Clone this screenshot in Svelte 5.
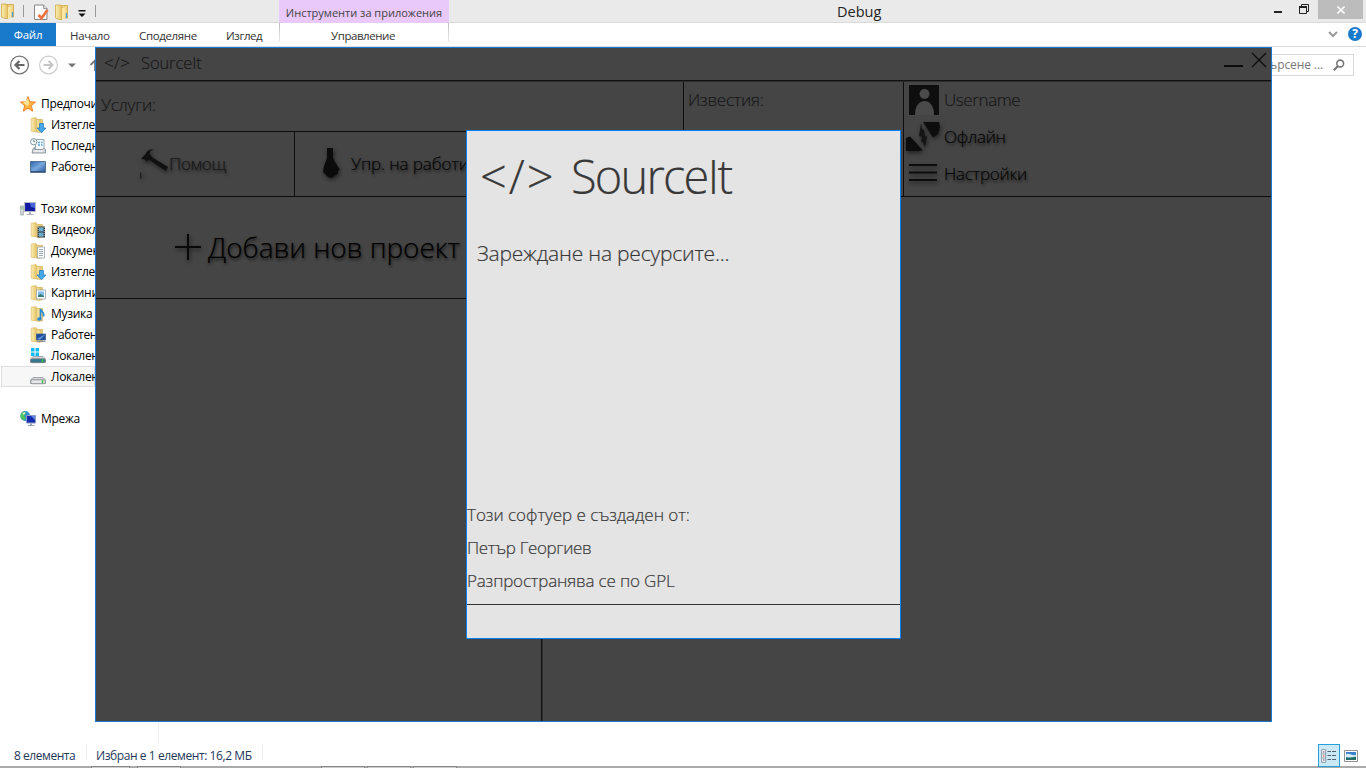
<script>
  const groups = [
    {
      label: 'Предпочи', icon: 'star',
      items: [
        { label: 'Изтегле', icon: 'download' },
        { label: 'Последн', icon: 'recent' },
        { label: 'Работен', icon: 'screen' }
      ]
    },
    {
      label: 'Този комп', icon: 'pc',
      items: [
        { label: 'Видеокл', icon: 'video' },
        { label: 'Докумен', icon: 'doc' },
        { label: 'Изтегле', icon: 'download' },
        { label: 'Картини', icon: 'picture' },
        { label: 'Музика', icon: 'music' },
        { label: 'Работен', icon: 'desk' },
        { label: 'Локален', icon: 'windisk' },
        { label: 'Локален', icon: 'disk', selected: true }
      ]
    },
    { label: 'Мрежа', icon: 'network', items: [] }
  ];
  const folders = ['download', 'video', 'doc', 'picture', 'music', 'desk'];
  const taskButtons = [[91, 39], [137, 44], [321, 44], [367, 44], [413, 44]];
</script>

{#snippet icon(name)}
  <svg class="ico" viewBox="0 0 16 16" width="16" height="16">
    <defs>
      <linearGradient id="fold" x1="0" x2="1"><stop offset="0" stop-color="#fbeeb4" /><stop offset="1" stop-color="#e3c062" /></linearGradient>
      <linearGradient id="blue" x1="0" y1="0" x2="1" y2="1"><stop offset="0" stop-color="#2c62ae" /><stop offset=".5" stop-color="#78a8dc" /><stop offset="1" stop-color="#24549a" /></linearGradient>
    </defs>
    {#if folders.includes(name)}
      <path d="M7 2.5h5.5V15H7z" fill="#e8cb78" stroke="#cda94f" stroke-width=".6" />
      <path d="M1.2 1.2 6 .6l1 1.6V15l-5.8-.8z" fill="url(#fold)" stroke="#d6b65c" stroke-width=".6" />
      <path d="M6.4 2 10 3v12.5L6.4 14.6z" fill="#f2dc93" stroke="#d0ae55" stroke-width=".5" />
    {/if}
    {#if name === 'folder'}
      <path d="M6 1.500h7.500V14H6z" fill="#f0d684" stroke="#cda540" stroke-width=".8" />
      <path d="M1.500 1H6l2 2v12.500H5L1.500 14z" fill="url(#fold)" stroke="#d0a944" stroke-width=".8" />
      <path d="M8 4h3v11H8z" fill="#f7e6a5" />
      <path d="M12.500 9v5" stroke="#4ba3df" stroke-width="1.400" />
    {:else if name === 'star'}
      <path d="M8 .5 10 5.8l5.6.3-4.3 3.6 1.5 5.5L8 12.2l-4.8 3 1.5-5.5L.4 6.1 6 5.800z" fill="#ffb33c" stroke="#e8792a" stroke-width=".9" />
      <path d="M8 2.500 9.200 6.500 8 10 3 7z" fill="#ffe39a" />
    {:else if name === 'download'}
      <path d="M9.500 6.500h4v4.500H16L11.500 15.800 7 11h2.500z" fill="#45a8ea" stroke="#1b74bd" stroke-width=".7" />
    {:else if name === 'recent'}
      <path d="M5.500 1.500h8.500v10H5.500z" fill="#f2f8fc" stroke="#8296a4" stroke-width=".8" />
      <path d="M8 4.500h2m1 0h1.500M8 7h2m1 0h1.500" stroke="#56a5d6" stroke-width="1.300" />
      <path d="m3 10.500 1.500-1v2h8l1.500-1 1.500 1v3.500H2z" fill="#d5dadd" stroke="#7d898f" stroke-width=".8" />
      <path d="M4 13h9" stroke="#fff" />
      <circle cx="3.700" cy="3.700" r="3.200" fill="#f8fafb" stroke="#8594a0" stroke-width="1" />
      <path d="M3.700 1.700v2H5.200" fill="none" stroke="#4d6476" stroke-width=".8" />
    {:else if name === 'screen'}
      <path d="M.5 2.500h15v11H.5z" fill="url(#blue)" stroke="#54718f" />
      <path d="M1 12.500h14" stroke="#35557f" stroke-width="1" />
    {:else if name === 'pc'}
      <path d="M.7 5h2.600v9H.7z" fill="#dfe4e4" stroke="#849090" stroke-width=".7" />
      <path d="M1.200 7h1.500" stroke="#39b23c" />
      <path d="M4.500 1.500h11v9h-11z" fill="#1119a0" stroke="#b5bbc4" stroke-width="1.200" />
      <path d="M10 2h5v5l-4-1z" fill="#4866da" />
      <path d="M9 11h2v2h2.500v1h-7v-1H9z" fill="#a9afb8" />
    {:else if name === 'video'}
      <path d="M7.500 4.500h7.500v11H7.500z" fill="#2f3a42" />
      <path d="M9 5.200h4.500v4.300H9zM9 10.500h4.500v4.300H9z" fill="#6eaacc" />
      <path d="M8.200 5v10M14.300 5v10" stroke="#dae0e4" stroke-width=".7" stroke-dasharray="1 1" />
    {:else if name === 'doc'}
      <path d="M7.500 4h7v11h-7z" fill="#fafcfd" stroke="#9ba5ac" stroke-width=".8" />
      <path d="M9 6.500h4M9 8.500h4M9 10.500h4M9 12.500h4" stroke="#8298ac" stroke-width=".8" />
    {:else if name === 'picture'}
      <path d="M6.500 5h9v9h-9z" fill="#fbfcfd" stroke="#98a6b1" stroke-width=".8" />
      <path d="M8 6.500h6V12H8z" fill="#80bfeb" /><path d="M8 10.500 10.500 9l3.500 2v1H8z" fill="#387d6f" />
    {:else if name === 'music'}
      <path d="M10.500 13V3c.5 2.500 4.500 3.500 3 7.500" fill="none" stroke="#278bd6" stroke-width="1.600" />
      <ellipse cx="9.300" cy="13" rx="2.200" ry="1.700" fill="#278bd6" />
    {:else if name === 'desk'}
      <path d="M6.500 7h9v6h-9z" fill="#1e4e9e" stroke="#35588e" stroke-width=".7" />
      <path d="M7 12 15 7.500V8L10 12.500z" fill="#6ca0dd" /><path d="M7 14.500h8.500" stroke="#9099a3" />
    {:else if name === 'windisk' || name === 'disk'}
      {#if name === 'windisk'}
        <path d="M1 0h3.500v3.500H1zM5.500 0H9v3.500H5.500zM1 4.500h3.500V8H1zM5.500 4.500H9V8H5.500z" fill="#0abbf2" />
      {/if}
      <path d="M3 8.500.5 11v3.500h15V11L13 8.500z" fill="#d2d5d7" stroke="#888e93" stroke-width=".7" />
      <rect x=".7" y="10.800" width="14.600" height="3.900" rx="1.500" fill={name === 'windisk' ? '#36758e' : '#e6e8e8'} stroke="#7c8387" stroke-width=".8" />
      <path d="M12.500 11.300v2.800" stroke="#30c83d" stroke-width="1.500" />
    {:else if name === 'network'}
      <circle cx="5.200" cy="5" r="4.900" fill="#2b8fd0" />
      <path d="M1 3C3 0 5 .5 6 2L4 5l2 2-2 2.300C2 8.500.6 7 .5 5z" fill="#4fc356" />
      <path d="M2.500 2.500 4.500 1l1 1-2 2z" fill="#d9f5dc" />
      <path d="M6.500 4.500h9v7.500h-9z" fill="#142bb0" stroke="#8d9cc6" />
      <path d="M11 5h4v4z" fill="#5e83e6" /><path d="M10 12.500h2v1.500h2.500v1H8v-1h2z" fill="#97a2b4" />
    {/if}
  </svg>
{/snippet}

<main class="explorer">
  <header class="caption">
    <div class="quick">
      {@render icon('folder')}
      <i class="sep s1"></i>
      <svg class="check" width="16" height="17" viewBox="0 0 16 17"><path d="M1.500 1h9L14 4.500V15.500H1.500z" fill="#fbfbfb" stroke="#888" /><path d="M10.500 1v3.500H14" fill="#ddd" stroke="#888" stroke-width=".8" /><path d="m5.500 11 3 3L14.500 6" fill="none" stroke="#eb7442" stroke-width="2.800" /></svg>
      <span class="q2">{@render icon('folder')}</span>
      <svg class="drop" width="8" height="8" viewBox="0 0 8 8"><path d="M.5 0h7v1.500h-7zM.5 3.500h7L4 7z" fill="#111" /></svg>
      <i class="sep s2"></i>
    </div>
    <div class="tools">Инструменти за приложения</div>
    <h1>Debug</h1>
    <div class="winbtns">
      <svg width="9" height="12"><path d="M0 10h8" stroke="#222" stroke-width="2" /></svg>
      <svg width="11" height="11" viewBox="0 0 11 11"><path d="M.5 3h7v6.500h-7z M2.500 2.500V.5h7V7.500h-2" fill="none" stroke="#222" /><path d="M0 3h8" stroke="#222" stroke-width="2" /></svg>
      <button class="close" aria-label="Close"><svg width="8" height="8"><path d="m.5.5 7 7m0-7-7 7" stroke="#fff" stroke-width="1.600" /></svg></button>
    </div>
  </header>

  <nav class="ribbon">
    <span class="file">Файл</span>
    <span class="t1">Начало</span>
    <span class="t2">Споделяне</span>
    <span class="t3">Изглед</span>
    <span class="manage">Управление</span>
    <svg class="chev" width="10" height="7"><path d="m1 1 4 4 4-4" fill="none" stroke="#999" stroke-width="2" /></svg>
    <span class="help">?</span>
  </nav>

  <div class="address">
    <svg width="20" height="20" viewBox="0 0 20 20"><circle cx="10.500" cy="10" r="8.900" fill="none" stroke="#757575" stroke-width="1.300" /><path d="M15.500 10h-9m4-4-4 4 4 4" fill="none" stroke="#666" stroke-width="2.200" /></svg>
    <svg class="fwd" width="20" height="20" viewBox="0 0 20 20"><circle cx="10.500" cy="10" r="8.900" fill="none" stroke="#cdcdcd" stroke-width="1.200" /><path d="M5.500 10h9m-4-4 4 4-4 4" fill="none" stroke="#c6c6c6" stroke-width="2" /></svg>
    <svg class="hist" width="8" height="5"><path d="M0 .5h8L4 4.500z" fill="#777" /></svg>
    <svg class="up" width="12" height="12"><path d="M6 12V2M1.500 6 6 1.500 10.500 6" fill="none" stroke="#777" stroke-width="1.800" /></svg>
    <div class="search"><span>ърсене ...</span>
      <svg width="12" height="12" viewBox="0 0 12 12"><circle cx="7.200" cy="4.500" r="3.400" fill="none" stroke="#777" stroke-width="1.600" /><path d="M5 7 .8 11.200" stroke="#777" stroke-width="2.200" /></svg>
    </div>
  </div>

  <div class="content">
    <aside>
      {#each groups as g}
        <section>
          <div class="row head">{@render icon(g.icon)}<span>{g.label}</span></div>
          {#each g.items as it}
            <div class="row" class:selected={it.selected}>{@render icon(it.icon)}<span>{it.label}</span></div>
          {/each}
        </section>
      {/each}
    </aside>
    <div class="divider"></div>
  </div>

  <footer>
    <span class="count">8 елемента</span>
    <span class="picked">Избран е 1 елемент: 16,2 МБ</span>
    <div class="views">
      <span class="details"><svg width="16" height="14" viewBox="0 0 16 14"><path d="M.7.700h4v12.600h-4zM.7 5h4M.7 9h4" fill="#fff" stroke="#8999a5" /><path d="M6.500 2.500h3.500m1 0h4M6.500 6.500h3.500m1 0h4M6.500 10.500h3.500m1 0h4" stroke="#51616d" /><path d="M2 2.500h1.400v1H2zM2 10.500h1.400v1H2z" fill="#426" /><path d="M2 6.500h1.400v1H2z" fill="#d11" /></svg></span>
      <svg width="14" height="12" viewBox="0 0 14 12"><path d="M.5.500h13v11H.5z" fill="#fff" stroke="#929292" /><path d="M2 2h10v8H2z" fill="#3b80cb" /><path d="M2 4.500C5 2 7 6 12 5v2L7 8 2 7z" fill="#d8effa" /><path d="M2 7.500c4 .5 6 0 10-1V10H2z" fill="#256e66" /></svg>
    </div>
  </footer>
  <div class="taskbar">
    {#each taskButtons as [x, w]}<i style="left:{x}px;width:{w}px"></i>{/each}
  </div>
</main>

<div class="app">
  <div class="apptitle">
    <span class="code">&lt;/&gt;</span><span class="name">SourceIt</span>
    <svg class="min" width="20" height="16"><path d="M0 15h19" stroke="#0d0d0d" stroke-width="2" /></svg>
    <svg class="x" width="16" height="16"><path d="m1 1 14 14M15 1 1 15" stroke="#0d0d0d" stroke-width="1.400" /></svg>
  </div>
  <div class="top">
    <div class="services">
      <div class="label">Услуги:</div>
      <div class="buttons">
        <div class="btn helpbtn">
          <svg width="29" height="32" viewBox="0 0 29 32"><path d="M1 12 6 6.500C6.500 4 9 2 14 2.500l-3.500 1.500L9.500 7l3 3.500L28 20l-2 4L8.500 12.500l-2 2.500L5 12.500z" fill="#101010" /><path d="M0 25.500h1.500v6H0z" fill="#222" /></svg>
          <span>Помощ</span>
        </div>
        <div class="btn tie">
          <svg width="18" height="31" viewBox="0 0 18 31"><path d="M5 0h6v10l2 4 5 8-2 .5v3L11 29l-2 1-3-1-5-5 1-6 3-8z" fill="#0b0b0b" /></svg>
          <span>Упр. на работи</span>
        </div>
      </div>
    </div>
    <div class="notices">Известия:</div>
    <div class="user">
      <div class="urow"><svg class="avatar" width="30" height="30" viewBox="0 0 30 30"><path d="M0 0h30v30H0z" fill="#0e0e0e" /><circle cx="15.500" cy="9" r="5" fill="#4a4a4a" /><path d="M6 30c0-9 4-14 9.500-14S25 21 25 30z" fill="#4a4a4a" /></svg><span class="plain">Username</span></div>
      <div class="urow"><svg class="offline" width="34" height="30" viewBox="0 0 34 30"><path d="M17 0h16l1 5-2 7-5 3.500zM0 16l4-1.500L17 28.500l-5 .5H0z" fill="#0d0d0d" /><path d="m15 1 1 6 2 1 1 6 2 .5-2 11-2-5-2-.5 1-5-3-1z" fill="#151515" /></svg><span>Офлайн</span></div>
      <div class="urow"><svg class="burger" width="30" height="18"><path d="M1 1h28M1 8.500h28M1 16h28" stroke="#0c0c0c" stroke-width="2.200" /></svg><span>Настройки</span></div>
    </div>
  </div>
  <div class="workspace">
    <div class="projects">
      <div class="add"><svg width="28" height="28"><path d="M14 1v26M1 14h26" stroke="#090909" stroke-width="2" /></svg><span>Добави нов проект</span></div>
    </div>
  </div>
</div>

<div class="splash">
  <div class="brand"><span class="bcode">&lt;/&gt;</span><span class="bname">SourceIt</span></div>
  <div class="loading">Зареждане на ресурсите...</div>
  <div class="credits">
    <p class="c1">Този софтуер е създаден от:</p>
    <p class="c2">Петър Георгиев</p>
    <p class="c3">Разпространява се по GPL</p>
  </div>
  <div class="bar"></div>
</div>

<style>
  :global(body) { margin: 0; overflow: hidden; }
  * { box-sizing: border-box; }
  svg { display: block; flex: none; }
  .explorer { width: 1366px; height: 768px; display: flex; flex-direction: column; background: #fff; font: 12px/16px "Open Sans", "Noto Sans", sans-serif; color: #222; position: relative; white-space: nowrap; }
  .caption { height: 23px; background: #eaeaea; border-bottom: 1px solid #dadada; display: flex; flex: none; }
  .quick { width: 279px; display: flex; align-items: flex-start; padding-top: 3px; }
  .sep { width: 1px; height: 12px; background: #999; margin-top: 2px; }
  .s1 { margin-left: 7px; }
  .check { margin: 1px 0 0 9px; }
  .q2 { margin: 1px 0 0 5px; }
  .drop { margin: 7px 0 0 8px; }
  .s2 { margin-left: 9px; }
  .tools { width: 170px; height: 23px; background: #e8c9fa; text-align: center; font-size: 11px; line-height: 25px; color: #444; }
  h1 { margin: 0 0 0 388px; font: 400 14.500px/23px "Open Sans", sans-serif; color: #222; width: 60px; }
  .winbtns { margin-left: auto; display: flex; align-items: flex-start; }
  .winbtns > svg { margin-top: 2px; }
  .winbtns > svg:nth-child(2) { margin: 4px 8px 0 16px; }
  .close { width: 45px; height: 19px; margin-right: 3px; border: 0; padding: 0; background: #bcbcbc; display: grid; place-items: center; }
  .ribbon { height: 24px; flex: none; border-bottom: 1px solid #dadada; display: flex; line-height: 26px; font-size: 11.500px; color: #333; letter-spacing: -.2px; }
  .file { width: 56px; background: #1979ca; color: #fff; text-align: center; line-height: 24px; height: 23px; }
  .t1 { margin-left: 14px; width: 69px; letter-spacing: -.35px; }
  .t2 { width: 87px; letter-spacing: -.35px; }
  .t3 { width: 53px; letter-spacing: -.45px; }
  .manage { width: 170px; text-align: center; height: 19px; border: solid; border-width: 0 1px; border-image: linear-gradient(#bbb, #eee) 1; letter-spacing: -.45px; padding-right: 2px; }
  .chev { margin: 8px 10px 0 auto; }
  .help { width: 14px; height: 14px; border-radius: 7px; background: #1979ca; color: #fff; font-weight: 700; font-size: 12px; line-height: 14px; text-align: center; margin: 4px 4px 0 0; }
  .address { height: 46px; flex: none; display: flex; align-items: flex-start; padding: 8px 12px 0 9px; }
  .fwd { margin-left: 9px; }
  .hist { margin: 8px 0 0 10px; }
  .up { margin: 4px 0 0 13px; }
  .search { margin-left: auto; width: 154px; height: 22px; border: 1px solid #d9d9d9; display: flex; align-items: center; justify-content: flex-end; gap: 10px; padding-right: 8px; color: #777; margin-top: -1px; letter-spacing: -.1px; }
  .content { flex: 1; display: flex; min-height: 0; }
  aside { width: 95px; color: #000; }
  .divider { width: 64px; border-right: 1px solid #f0f0f0; }
  section { margin-bottom: 21px; }
  .row { height: 21px; display: flex; align-items: center; gap: 5px; padding-left: 30px; font-size: 12px; letter-spacing: -.3px; }
  .row.head { padding-left: 20px; }
  .row.selected { margin-left: 1px; padding-left: 28px; border: 1px solid #dedede; background: #f7f7f7; }
  footer { height: 22px; flex: none; display: flex; align-items: flex-start; color: #1e395b; line-height: 23px; }
  .count { width: 86px; padding-left: 14px; letter-spacing: -.45px; }
  .picked { border-left: 1px solid #eee; padding: 0 10px 0 9px; border-right: 1px solid #eee; height: 16px; letter-spacing: -.42px; }
  .views { margin-left: auto; margin-right: 8px; display: flex; align-items: center; gap: 4px; }
  .details { width: 22px; height: 23px; border: 1px solid #26a0da; background: #cbe8f6; display: grid; place-items: center; position: relative; z-index: 1; }
  .taskbar { height: 2px; flex: none; background: #aaa; position: relative; }
  .taskbar i { position: absolute; top: 0; height: 2px; background: #ccc; border: 1px solid #888; border-bottom: 0; }

  .app, .splash { font-family: "Open Sans", "Noto Sans", sans-serif; font-weight: 300; white-space: nowrap; }
  .app { position: absolute; left: 95px; top: 47px; width: 1177px; height: 675px; background: #454545; border: 1px solid #1a78d6; display: flex; flex-direction: column; color: #171717; font-size: 17px; letter-spacing: -.25px; -webkit-text-stroke: .15px; }
  .apptitle { height: 33px; flex: none; border-bottom: 1px solid #101010; display: flex; line-height: 30px; }
  .code { margin-left: 8px; width: 37px; letter-spacing: .4px; }
  .name { font-size: 16.500px; letter-spacing: -.1px; }
  .min { margin: 3px -1px 0 auto; }
  .x { margin: 4px 4px 0 8px; }
  .top { height: 116px; flex: none; display: grid; grid-template-columns: 588px 220px 1fr; border-top: 1px solid #303030; border-bottom: 1px solid #0d0d0d; }
  .services { border-right: 1px solid #0d0d0d; display: flex; flex-direction: column; }
  .label { height: 50px; border-bottom: 1px solid #0d0d0d; padding-left: 5px; line-height: 46px; }
  .buttons { flex: 1; display: grid; grid-template-columns: 199px 1fr; }
  .btn { display: flex; align-items: center; padding-bottom: 2px; }
  .btn svg, .add svg, .offline, .burger { filter: drop-shadow(1px 2px 2px #0008); }
  .btn span, .add span, .urow span { text-shadow: 1px 2px 3px #000a; }
  .helpbtn { padding-left: 44px; border-right: 1px solid #0d0d0d; }
  .tie { padding-left: 27px; gap: 11px; color: #050505; letter-spacing: -.1px; }
  .notices { border-right: 1px solid #0d0d0d; padding-left: 4px; line-height: 36px; }
  .user { padding: 0 0 0 2px; color: #050505; margin-top: -1px; }
  .urow { height: 37px; display: flex; align-items: center; }
  .urow span { margin: -1px 0 0 5px; }
  .urow .plain { text-shadow: none; color: #171717; letter-spacing: -.4px; }
  .avatar { margin-left: 3px; }
  .offline { margin-right: -1px; }
  .burger { margin: -1px 1px 0 2px; }
  .workspace { flex: 1; display: flex; }
  .projects { width: 446px; border-right: 1px solid #101010; box-shadow: 1px 0 #303030; }
  .add { height: 102px; border-bottom: 1px solid #0d0d0d; display: flex; align-items: center; padding: 0 0 2px 78px; font-size: 28px; gap: 6px; color: #000; letter-spacing: -.05px; }

  .splash { position: absolute; left: 466px; top: 130px; width: 435px; height: 509px; border: 1px solid #007fff; background: #e4e4e4; color: #383838; display: flex; flex-direction: column; -webkit-text-stroke: .2px; }
  .brand { height: 94px; display: flex; font-size: 47px; line-height: 91px; }
  .bcode { margin-left: 13px; width: 91px; letter-spacing: 2px; }
  .bname { letter-spacing: -1.800px; }
  .loading { padding-left: 10px; font-size: 21px; line-height: 56px; letter-spacing: -.2px; }
  .credits { margin-top: auto; font-size: 17px; }
  p { margin: 0; line-height: 33px; }
  .c1 { letter-spacing: -.03px; }
  .c2 { letter-spacing: -.32px; }
  .c3 { letter-spacing: -.17px; }
  .bar { height: 41px; padding-top: 7px; }
  .bar::before { content: ""; display: block; border-top: 1px solid #333; }
</style>
